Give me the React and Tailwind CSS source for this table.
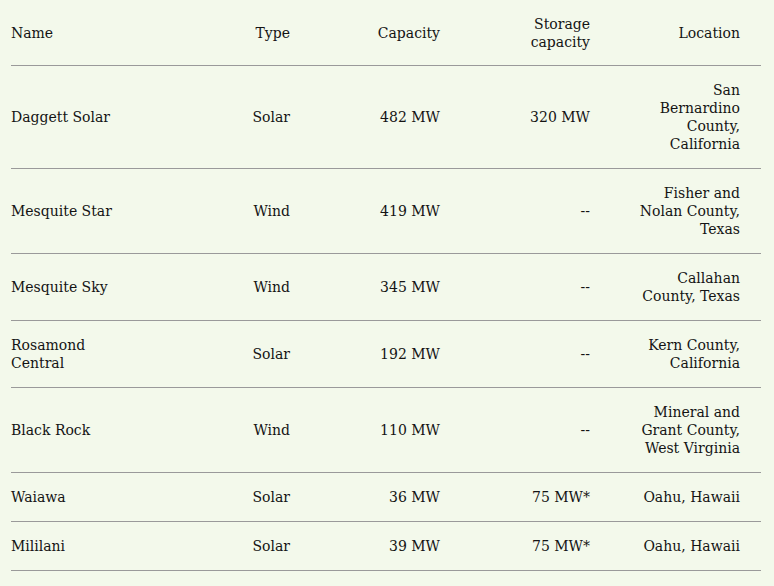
import React from "react";

const rows = [
  ["Daggett Solar", "Solar", "482 MW", "320 MW", "San Bernardino County, California"],
  ["Mesquite Star", "Wind", "419 MW", "--", "Fisher and Nolan County, Texas"],
  ["Mesquite Sky", "Wind", "345 MW", "--", "Callahan County, Texas"],
  ["Rosamond Central", "Solar", "192 MW", "--", "Kern County, California"],
  ["Black Rock", "Wind", "110 MW", "--", "Mineral and Grant County, West Virginia"],
  ["Waiawa", "Solar", "36 MW", "75 MW*", "Oahu, Hawaii"],
  ["Mililani", "Solar", "39 MW", "75 MW*", "Oahu, Hawaii"],
];

export default function App() {
  return (
    <div
      className="min-h-[586px] w-full bg-[#f3f9eb] pt-[1px] pl-[11px] pr-[13px] text-[#141414]"
      style={{ fontFamily: '"DejaVu Serif", serif' }}
    >
      <table className="w-[750px] table-fixed border-collapse text-[14px] leading-[18px]">
        <colgroup>
          <col className="w-[150px]" />
          <col className="w-[150px]" />
          <col className="w-[150px]" />
          <col className="w-[150px]" />
          <col className="w-[150px]" />
        </colgroup>
        <thead>
          <tr className="border-b border-[#9a9a9a]">
            <th className="py-[14px] pl-0 pr-[21px] text-left font-normal align-middle">Name</th>
            <th className="py-[14px] pl-[20px] pr-[21px] text-right font-normal align-middle">Type</th>
            <th className="py-[14px] pl-[20px] pr-[21px] text-right font-normal align-middle">Capacity</th>
            <th className="py-[14px] pl-[20px] pr-[21px] text-right font-normal align-middle">Storage capacity</th>
            <th className="py-[14px] pl-[20px] pr-[21px] text-right font-normal align-middle">Location</th>
          </tr>
        </thead>
        <tbody>
          {rows.map((r) => (
            <tr key={r[0]} className="border-b border-[#9a9a9a]">
              <td className="py-[15px] pl-0 pr-[21px] text-left align-middle">{r[0]}</td>
              <td className="py-[15px] pl-[20px] pr-[21px] text-right align-middle">{r[1]}</td>
              <td className="py-[15px] pl-[20px] pr-[21px] text-right align-middle">{r[2]}</td>
              <td className="py-[15px] pl-[20px] pr-[21px] text-right align-middle">{r[3]}</td>
              <td className="py-[15px] pl-[20px] pr-[21px] text-right align-middle">{r[4]}</td>
            </tr>
          ))}
        </tbody>
      </table>
    </div>
  );
}
